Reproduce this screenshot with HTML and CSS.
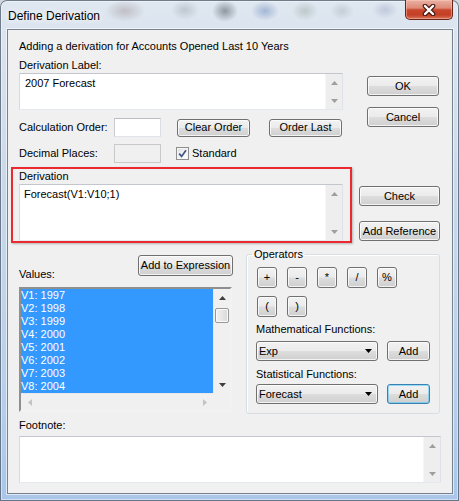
FILE: index.html
```html
<!DOCTYPE html>
<html lang="en">
<head>
<meta charset="utf-8">
<title>Define Derivation</title>
<link rel="stylesheet" href="styles.css">
</head>
<body>
<div class="window">
  <div class="titlebar">
    <span class="title">Define Derivation</span>
    <div class="close-btn">
      <svg width="14" height="12" viewBox="0 0 14 12">
        <path d="M3 2 L11 10 M11 2 L3 10" stroke="#4a1a12" stroke-width="4.6" stroke-linecap="round" fill="none"/>
        <path d="M3 2 L11 10 M11 2 L3 10" stroke="#ffffff" stroke-width="2.4" stroke-linecap="round" fill="none"/>
      </svg>
    </div>
  </div>

  <div class="client">
    <section class="top">
      <div class="top-main">
        <p class="intro">Adding a derivation for Accounts Opened Last 10 Years</p>
        <div class="caption">Derivation Label:</div>
        <div class="memo memo-label">
          <div class="memo-text">2007 Forecast</div>
          <div class="vscroll">
            <span class="sb-btn"><svg width="7" height="4" viewBox="0 0 7 4"><path d="M0 4H7L3.5 0Z" class="arrow-off"/></svg></span>
            <span class="sb-track"></span>
            <span class="sb-btn"><svg width="7" height="4" viewBox="0 0 7 4"><path d="M0 0H7L3.5 4Z" class="arrow-off"/></svg></span>
          </div>
        </div>
        <div class="row">
          <span class="field-label">Calculation Order:</span>
          <span class="edit"></span>
          <button class="btn btn-order btn-clear">Clear Order</button>
          <button class="btn btn-order btn-last">Order Last</button>
        </div>
        <div class="row row-decimal">
          <span class="field-label">Decimal Places:</span>
          <span class="edit edit-disabled"></span>
          <label class="check">
            <span class="check-box"><svg width="9" height="9" viewBox="0 0 9 9"><path d="M1.2 4.6 L3.6 7.4 L8 1.2" fill="none" stroke="#3f5589" stroke-width="1.7"/></svg></span>
            Standard
          </label>
        </div>
      </div>
      <div class="dialog-actions">
        <button class="btn btn-wide">OK</button>
        <button class="btn btn-wide btn-cancel">Cancel</button>
      </div>
    </section>

    <section class="derivation">
      <div class="highlight">
        <div class="caption">Derivation</div>
        <div class="memo memo-expr">
          <div class="memo-text">Forecast(V1:V10;1)</div>
          <div class="vscroll">
            <span class="sb-btn"><svg width="7" height="4" viewBox="0 0 7 4"><path d="M0 4H7L3.5 0Z" class="arrow-off"/></svg></span>
            <span class="sb-track"></span>
            <span class="sb-btn"><svg width="7" height="4" viewBox="0 0 7 4"><path d="M0 0H7L3.5 4Z" class="arrow-off"/></svg></span>
          </div>
        </div>
      </div>
      <div class="expr-actions">
        <button class="btn btn-side">Check</button>
        <button class="btn btn-side btn-ref">Add Reference</button>
      </div>
    </section>

    <section class="builder">
      <div class="values">
        <div class="values-head">
          <span class="values-label">Values:</span>
          <button class="btn btn-add-expr">Add to Expression</button>
        </div>
        <div class="listbox">
          <ul class="list-items">
            <li>V1: 1997</li>
            <li>V2: 1998</li>
            <li>V3: 1999</li>
            <li>V4: 2000</li>
            <li>V5: 2001</li>
            <li>V6: 2002</li>
            <li>V7: 2003</li>
            <li>V8: 2004</li>
          </ul>
          <div class="vscroll list-vscroll">
            <span class="sb-btn"><svg width="7" height="4" viewBox="0 0 7 4"><path d="M0 4H7L3.5 0Z" class="arrow-on"/></svg></span>
            <span class="sb-track"><span class="sb-thumb"></span></span>
            <span class="sb-btn"><svg width="7" height="4" viewBox="0 0 7 4"><path d="M0 0H7L3.5 4Z" class="arrow-on"/></svg></span>
          </div>
          <div class="hscroll">
            <span class="sb-btn"><svg width="4" height="7" viewBox="0 0 4 7"><path d="M4 0V7L0 3.5Z" class="arrow-faint"/></svg></span>
            <span class="sb-track"></span>
            <span class="sb-btn"><svg width="4" height="7" viewBox="0 0 4 7"><path d="M0 0V7L4 3.5Z" class="arrow-faint"/></svg></span>
          </div>
          <div class="sb-corner"></div>
        </div>
      </div>

      <fieldset class="operators">
        <legend>Operators</legend>
        <div class="op-row">
          <button class="btn btn-op">+</button>
          <button class="btn btn-op">-</button>
          <button class="btn btn-op">*</button>
          <button class="btn btn-op">/</button>
          <button class="btn btn-op">%</button>
        </div>
        <div class="op-row op-row-2">
          <button class="btn btn-op">(</button>
          <button class="btn btn-op">)</button>
        </div>
        <div class="fn-label">Mathematical Functions:</div>
        <div class="fn-row">
          <div class="combo"><span>Exp</span><svg width="7" height="4" viewBox="0 0 7 4"><path d="M0 0H7L3.5 4Z" fill="#000"/></svg></div>
          <button class="btn btn-add">Add</button>
        </div>
        <div class="fn-label fn-label-2">Statistical Functions:</div>
        <div class="fn-row fn-row-2">
          <div class="combo"><span>Forecast</span><svg width="7" height="4" viewBox="0 0 7 4"><path d="M0 0H7L3.5 4Z" fill="#000"/></svg></div>
          <button class="btn btn-add btn-default">Add</button>
        </div>
      </fieldset>
    </section>

    <section class="footnote">
      <div class="caption">Footnote:</div>
      <div class="memo memo-foot">
        <div class="memo-text"></div>
        <div class="vscroll">
          <span class="sb-btn"><svg width="7" height="4" viewBox="0 0 7 4"><path d="M0 4H7L3.5 0Z" class="arrow-off"/></svg></span>
          <span class="sb-track"></span>
          <span class="sb-btn"><svg width="7" height="4" viewBox="0 0 7 4"><path d="M0 0H7L3.5 4Z" class="arrow-off"/></svg></span>
        </div>
      </div>
    </section>
  </div>
</div>
</body>
</html>
```

FILE: styles.css
```css
* {
  box-sizing: border-box;
}

html, body {
  margin: 0;
  padding: 0;
}

body {
  width: 459px;
  height: 501px;
  overflow: hidden;
  background: #d3d8de;
  font: 11px/13px "Liberation Sans", Arial, sans-serif;
  color: #000;
}

/* ---------- window frame ---------- */
.window {
  width: 459px;
  height: 501px;
  display: flex;
  flex-direction: column;
  padding: 0 6px 7px 7px;
  border-radius: 7px 7px 0 0;
  background: linear-gradient(180deg, #dfe7f0 0%, #cad9ea 35%, #b9d0ea 75%, #a9c6e8 100%);
  box-shadow: inset 0 0 0 1px rgba(45, 60, 80, 0.65), inset 0 0 0 2px rgba(255, 255, 255, 0.45);
}

.titlebar {
  height: 29px;
  flex: none;
  display: flex;
  align-items: flex-start;
  background:
    radial-gradient(ellipse 20px 11px at 118px 11px, rgba(125, 100, 100, 0.3), transparent),
    radial-gradient(ellipse 14px 10px at 178px 10px, rgba(110, 120, 130, 0.28), transparent),
    radial-gradient(ellipse 13px 11px at 218px 11px, rgba(45, 55, 65, 0.45), transparent),
    radial-gradient(ellipse 14px 10px at 258px 11px, rgba(70, 105, 170, 0.38), transparent),
    radial-gradient(ellipse 13px 10px at 298px 11px, rgba(105, 125, 105, 0.28), transparent),
    radial-gradient(ellipse 12px 9px at 335px 11px, rgba(125, 130, 140, 0.25), transparent),
    radial-gradient(ellipse 13px 9px at 378px 10px, rgba(115, 125, 170, 0.28), transparent);
}

.title {
  margin: 9px 0 0 1px;
  font-size: 12px;
  line-height: 15px;
  color: #000;
  text-shadow: 0 0 6px rgba(255, 255, 255, 0.95), 0 0 10px rgba(255, 255, 255, 0.8);
}

.close-btn {
  margin-left: auto;
  width: 48px;
  height: 20px;
  display: flex;
  align-items: center;
  justify-content: center;
  border: 1px solid #6b2218;
  border-top: none;
  border-radius: 0 0 5px 5px;
  background: linear-gradient(180deg, #e9b1a4 0%, #de8a76 42%, #c9472d 52%, #c43f25 78%, #d77258 100%);
  box-shadow: inset 0 0 0 1px rgba(255, 210, 195, 0.45);
}

/* ---------- client area ---------- */
.client {
  flex: 1;
  background: #f0f0f0;
  border: 1px solid #76838f;
  box-shadow: 0 0 0 1px rgba(255, 255, 255, 0.6);
}

.caption {
  height: 13px;
}

/* top block */
.top {
  display: flex;
  padding: 10px 0 0 11px;
}

.top-main {
  width: 324px;
}

.intro {
  margin: 0;
  height: 13px;
  white-space: nowrap;
}

.top-main .caption {
  margin-top: 6px;
}

.memo {
  display: flex;
  background: #fff;
  border: 1px solid #abadb3;
  border-color: #c3c6cc #dfe3e8 #e3e9ef #d7dade;
}

.memo-text {
  flex: 1;
  padding: 3px 5px;
  white-space: nowrap;
}

.memo-label {
  height: 37px;
  margin-top: 1px;
}

.vscroll {
  width: 17px;
  flex: none;
  display: flex;
  flex-direction: column;
  background: #eeeeee;
  border-left: 1px solid #f6f6f6;
}

.sb-btn {
  height: 17px;
  flex: none;
  display: flex;
  align-items: center;
  justify-content: center;
}

.sb-track {
  flex: 1;
}

.arrow-off {
  fill: #9e9e9e;
}

.arrow-on {
  fill: #3e3e3e;
}

.arrow-faint {
  fill: #c4c4c4;
}

.row {
  display: flex;
  align-items: center;
  height: 19px;
  margin-top: 8px;
}

.row-decimal {
  margin-top: 7px;
}

.field-label {
  width: 95px;
  flex: none;
}

.edit {
  width: 47px;
  height: 19px;
  flex: none;
  background: #fff;
  border: 1px solid #c8cbd0;
  border-color: #b9bcc2 #dadde2 #e0e4e8 #c8cbd0;
}

.edit-disabled {
  background: #f0f0f0;
  border-color: #c9c9c9;
}

/* ---------- buttons ---------- */
.btn {
  padding: 0;
  margin: 0;
  font: inherit;
  color: #000;
  border: 1px solid #707070;
  border-radius: 3px;
  background: linear-gradient(180deg, #f2f2f2 0%, #ebebeb 48%, #dddddd 52%, #cfcfcf 100%);
  box-shadow: inset 0 0 0 1px rgba(255, 255, 255, 0.75);
  display: flex;
  align-items: center;
  justify-content: center;
  white-space: nowrap;
  flex: none;
}

.btn-order {
  width: 73px;
  height: 18px;
}

.btn-clear {
  margin-left: 16px;
}

.btn-last {
  margin-left: 19px;
}

.check {
  display: flex;
  align-items: center;
  margin-left: 15px;
  gap: 3px;
}

.check-box {
  width: 13px;
  height: 13px;
  display: flex;
  align-items: center;
  justify-content: center;
  border: 1px solid #8e8f8f;
  background: linear-gradient(135deg, #dcdcdc 0%, #f6f6f6 60%, #ffffff 100%);
  box-shadow: inset 0 0 0 1px #f4f4f4;
}

.dialog-actions {
  display: flex;
  flex-direction: column;
  margin-left: 24px;
  padding-top: 36px;
}

.btn-wide {
  width: 72px;
  height: 20px;
}

.btn-cancel {
  margin-top: 11px;
}

/* ---------- derivation block ---------- */
.derivation {
  display: flex;
  margin-top: 4px;
  padding-left: 3px;
}

.highlight {
  width: 341px;
  border: 2px solid #ea2a2f;
  padding: 1px 7px 0 6px;
  box-shadow: 1px 1px 2px rgba(0, 0, 0, 0.25);
}

.memo-expr {
  height: 57px;
  margin-top: 1px;
}

.memo-expr .memo-text {
  padding: 3px 4px;
}

.expr-actions {
  display: flex;
  flex-direction: column;
  margin-left: 7px;
  padding-top: 19px;
}

.btn-side {
  width: 81px;
  height: 20px;
}

.btn-ref {
  margin-top: 15px;
}

/* ---------- values and operators ---------- */
.builder {
  display: flex;
  align-items: flex-start;
  padding-left: 11px;
}

.values {
  width: 214px;
}

.values-head {
  display: flex;
  align-items: flex-start;
  margin-top: 12px;
}

.values-label {
  margin-top: 13px;
}

.btn-add-expr {
  margin-left: auto;
  width: 95px;
  height: 21px;
}

.listbox {
  width: 213px;
  height: 125px;
  margin-top: 6px;
  display: grid;
  grid-template-columns: 1fr 17px;
  grid-template-rows: 1fr 17px;
  background: #fff;
  border: 2px solid;
  border-color: #8f8f8f #f2f2f2 #f2f2f2 #8f8f8f;
  box-shadow: inset 1px 1px 0 #6a6a6a;
}

.list-items {
  list-style: none;
  margin: 0;
  padding: 0;
}

.list-items li {
  height: 13px;
  line-height: 13px;
  background: #3399ff;
  color: #fff;
  white-space: nowrap;
}

.list-vscroll {
  background: #f0f0f0;
  border-left: 1px solid #e8e8e8;
}

.list-vscroll .sb-track {
  padding: 1px 1px 0 1px;
}

.sb-thumb {
  display: block;
  height: 15px;
  margin-top: 1px;
  border: 1px solid #979797;
  border-radius: 2px;
  background: linear-gradient(90deg, #f2f2f2 0%, #e6e6e6 50%, #d8d8d8 100%);
  box-shadow: inset 0 0 0 1px #fafafa;
}

.hscroll {
  display: flex;
  background: #f0f0f0;
  border-top: 1px solid #e8e8e8;
}

.hscroll .sb-btn {
  width: 17px;
  height: auto;
}

.sb-corner {
  background: #f0f0f0;
}

.operators {
  width: 194px;
  margin: 5px 0 0 13px;
  padding: 6px 9px 9px 10px;
  border: 1px solid #d5dfe5;
  border-radius: 3px;
  box-shadow: inset 1px 1px 0 #ffffff;
  min-inline-size: 0;
}

.operators legend {
  margin-left: -5px;
  padding: 0 2px;
  line-height: 13px;
}

.op-row {
  display: flex;
  gap: 10px;
}

.op-row-2 {
  margin-top: 8px;
}

.btn-op {
  width: 20px;
  height: 21px;
}

.fn-label {
  margin: 6px 0 0 -1px;
  height: 13px;
}

.fn-label-2 {
  margin-top: 7px;
}

.fn-row {
  display: flex;
  align-items: center;
  margin-top: 5px;
  height: 20px;
}

.fn-row-2 {
  margin-top: 3px;
}

.combo {
  width: 122px;
  height: 20px;
  margin-left: -1px;
  display: flex;
  align-items: center;
  justify-content: space-between;
  padding: 0 5px 0 2px;
  border: 1px solid #707070;
  border-radius: 3px;
  background: linear-gradient(180deg, #f2f2f2 0%, #ebebeb 48%, #dddddd 52%, #cfcfcf 100%);
  box-shadow: inset 0 0 0 1px rgba(255, 255, 255, 0.75);
}

.btn-add {
  width: 43px;
  height: 20px;
  margin-left: 9px;
}

.btn-default {
  border-color: #3c7fb1;
  box-shadow: inset 0 0 0 1px rgba(72, 200, 251, 0.55);
}

/* ---------- footnote ---------- */
.footnote {
  padding-left: 11px;
}

.footnote .caption {
  margin-top: 5px;
}

.memo-foot {
  width: 422px;
  height: 47px;
  margin-top: 4px;
}
```
